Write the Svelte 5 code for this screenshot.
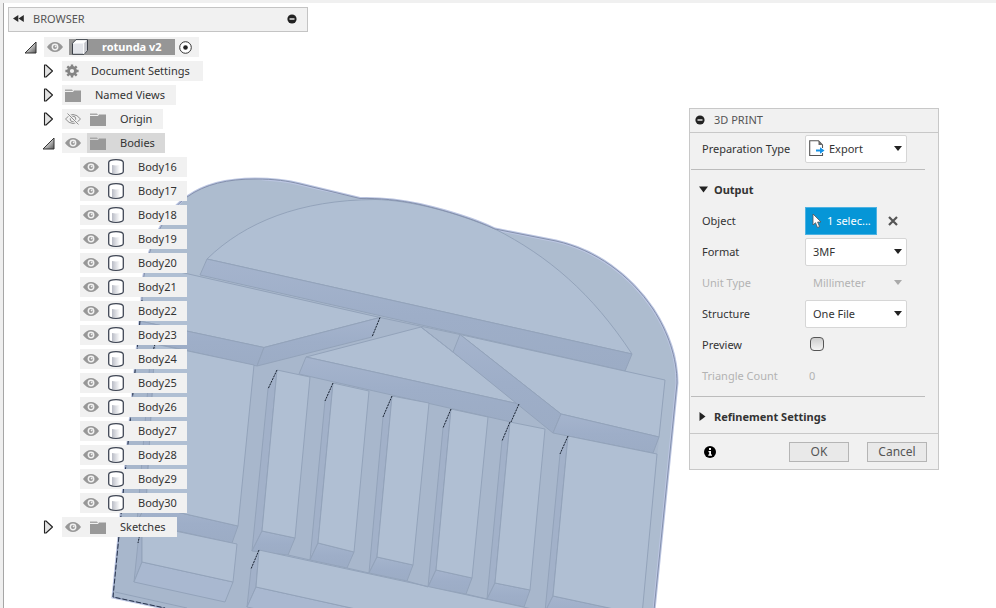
<script>
  const bodies = Array.from({ length: 15 }, (_, i) => ({
    name: `Body${16 + i}`, level: 2, kind: 'body', eye: 'on'
  }));
  const nodes = [
    { name: 'rotunda v2', level: 0, kind: 'cube', eye: 'on', open: true, root: true },
    { name: 'Document Settings', level: 1, kind: 'gear', open: false },
    { name: 'Named Views', level: 1, kind: 'folder', open: false },
    { name: 'Origin', level: 1, kind: 'folder', eye: 'off', open: false },
    { name: 'Bodies', level: 1, kind: 'folder', eye: 'on', open: true, picked: true },
    ...bodies,
    { name: 'Sketches', level: 1, kind: 'folder', eye: 'on', open: false }
  ];

  // Each recess: floor corners tl, tr, br, bl, then the outer wall corners left, low, lowRight
  const columns = [
    { tl: [277, 370], tr: [310, 377], br: [295, 538], bl: [262, 531], left: [268, 389], low: [252, 551], lr: [288, 555] },
    { tl: [333, 383], tr: [369, 391], br: [354, 552], bl: [318, 543], left: [325, 401], low: [310, 560], lr: [347, 568] },
    { tl: [392, 396], tr: [429, 403], br: [413, 565], bl: [377, 557], left: [383, 417], low: [369, 573], lr: [407, 581] },
    { tl: [451, 409], tr: [488, 417], br: [472, 578], bl: [436, 570], left: [443, 428], low: [428, 587], lr: [466, 594] },
    { tl: [510, 422], tr: [545, 429], br: [530, 590], bl: [495, 583], left: [502, 441], low: [487, 599], lr: [524, 607] },
    { tl: [568, 436], tr: [657, 454], br: [642, 615], bl: [553, 596], left: [560, 454], low: [545, 612], lr: [636, 632] },
    { tl: [155, 344], tr: [254, 365], br: [238, 526], bl: [146, 505], left: [150, 362], low: [137, 522], lr: [232, 543] },
    { tl: [142, 524], tr: [237, 544], br: [233, 582], bl: [142, 562], left: [138, 543], low: [134, 582], lr: [225, 602] },
    { tl: [259, 550], tr: [560, 615], br: [560, 654], bl: [256, 587], left: [251, 569], low: [247, 607], lr: [550, 674] }
  ];
  const pts = (...list) => list.map((p) => p.join(',')).join(' ');

  const outline =
    'M187 197 C205 184 228 179 255 179 C275 179 288 181 300 184 L360 198.500 C378 198 400 200 420 204.500 C448 211 476 220 495 229 L556 241 C596 250 630 275 653 309 C668 332 677 358 677 383 L653 620 L220 620 L113 597 L142 300 C142 258 160 216 187 197 Z';

  let preparation = $state('Export');
  let format = $state('3MF');
  let unit = $state('Millimeter');
  let structure = $state('One File');
  let preview = $state(false);
</script>

{#snippet eyeIcon(state)}
  <svg width="16" height="12" viewBox="0 0 16 12" aria-hidden="true">
    {#if state === 'on'}
      <path d="M0 6 Q3.500 1 8 1 T16 6 Q12.500 11 8 11 T0 6Z" fill="#979797" />
      <circle cx="8" cy="6" r="2.700" fill="#979797" stroke="#f1f1f1" stroke-width="1.500" />
      <circle cx="8.600" cy="5.400" r="0.900" fill="#f1f1f1" />
    {:else}
      <path d="M0.500 6 Q4 1.500 8 1.500 T15.500 6 Q12 10.500 8 10.500 T0.500 6Z" fill="none" stroke="#8f8f8f" />
      <circle cx="8" cy="6" r="2.800" fill="none" stroke="#8f8f8f" />
      <path d="M2.500 0.500 L13.500 11.500" stroke="#f1f1f1" stroke-width="2.500" />
      <path d="M2.500 0.500 L13.500 11.500" stroke="#8f8f8f" />
    {/if}
  </svg>
{/snippet}

{#snippet nodeIcon(kind)}
  {#if kind === 'cube'}
    <svg width="18" height="16" viewBox="0 0 18 16" aria-hidden="true">
      <path d="M1.500 4.300 L5 0.700 H16.500 V11.500 L13 15.300 H1.500Z" fill="#e3e5ea" stroke="#3b4048" stroke-linejoin="round" />
      <path d="M2 4.500 L5.300 1.200 H16 L12.700 4.500Z" fill="#fff" />
      <path d="M13 4.500 L16 1.200 V11.400 L13 14.700Z" fill="#c3c5cb" />
      <path d="M12.700 15 V4.500" stroke="#fff" />
    </svg>
  {:else if kind === 'gear'}
    <svg width="14" height="14" viewBox="0 0 14 14" aria-hidden="true">
      <circle cx="7" cy="7" r="3.500" fill="none" stroke="#858585" stroke-width="2.800" />
      <path d="M7 0.400 V3 M7 11 V13.600 M0.400 7 H3 M11 7 H13.600 M2.300 2.300 L4.200 4.200 M9.800 9.800 L11.700 11.700 M2.300 11.700 L4.200 9.800 M9.800 4.200 L11.700 2.300" stroke="#858585" stroke-width="2.400" />
    </svg>
  {:else if kind === 'folder'}
    <svg width="16" height="13" viewBox="0 0 16 13" aria-hidden="true">
      <path d="M0 0.500 H7 L8 2 H0Z" fill="#a8a8a8" />
      <path d="M0 3 H8 L9 1.500 H16 V13 H0Z" fill="#999" />
    </svg>
  {:else}
    <svg width="16" height="16" viewBox="0 0 16 16" aria-hidden="true">
      <path d="M0.700 3.500 C0.700 1.600 3.500 0.700 8 0.700 S15.300 1.600 15.300 3.500 V12.500 C15.300 14.400 12.500 15.300 8 15.300 S0.700 14.400 0.700 12.500Z" fill="#fff" stroke="#3f4654" stroke-width="1.300" />
      <path d="M4 6 Q8 6.800 12 6 V14 Q8 14.800 4 14Z" fill="url(#barrel)" />
    </svg>
  {/if}
{/snippet}

{#snippet collapseIcon()}
  <svg width="10" height="10" viewBox="0 0 10 10" aria-hidden="true">
    <circle cx="5" cy="5" r="4.600" fill="#222" />
    <path d="M2.500 5 H7.500" stroke="#fff" stroke-width="1.300" />
  </svg>
{/snippet}

<main class="workspace">
  <svg class="model" viewBox="0 0 996 608" preserveAspectRatio="xMinYMin slice" role="img" aria-label="Rotunda model">
    <defs>
      <linearGradient id="wall" x1="0" y1="0" x2="0" y2="1">
        <stop offset="0" stop-color="#a5b4cd" />
        <stop offset="0.500" stop-color="#9eaec8" />
        <stop offset="1" stop-color="#9cacc5" />
      </linearGradient>
      <linearGradient id="barrel">
        <stop offset="0" stop-color="#b9bcc6" />
        <stop offset="1" stop-color="#fff" />
      </linearGradient>
      <linearGradient id="corner" x1="0" y1="0" x2="1" y2="1">
        <stop offset="0.300" stop-color="#eee" />
        <stop offset="1" stop-color="#555" />
      </linearGradient>
      <clipPath id="shape"><path d={outline} /></clipPath>
    </defs>
    <path d={outline} fill="#adbccf" stroke="#bcc6e2" stroke-width="3" />
    <g clip-path="url(#shape)" stroke="#93a3ba" stroke-width="1" stroke-linejoin="round">
      <path d="M187 197 C205 184 228 179 255 179 L360 198 L207 259 L200 275 L130 260Z" fill="#adbccf" stroke="none" />
      <path d="M100 254 L665 380 L640 625 L100 625Z" fill="#a8b7cc" stroke="none" />
      <path d="M207 259 C245 222 300 200 375 199.500 C410 200 455 212 495 229 C548 256 592 293 632 354Z" fill="#b0bfd3" />
      <path d="M207 259 L632 354 L625 371 L200 275Z" fill="url(#wall)" />
      <path d="M140 263 L380 317.500 L264 347.500 L130 319Z" fill="#b0bfd3" />
      <path d="M130 319 L264 347.500 L257 366 L130 338Z" fill="url(#wall)" />
      <path d="M264 347.500 L380 317.500 L372 337 L257 366Z" fill="url(#wall)" />
      <path d="M380 317.500 L460 334.500" fill="none" />
      <path d="M421 327 L306 357 L519 404Z" fill="#b0bfd3" />
      <path d="M306 357 L519 404 L511 422 L299 374Z" fill="url(#wall)" />
      <path d="M421 327 L453 352" fill="none" />
      <path d="M421 327 L453 352 L519 404Z" fill="#b0bfd3" stroke="none" />
      <path d="M460 334.500 L665 380 L659 437 L561 414Z" fill="#b0bfd3" />
      <path d="M460 334.500 L561 414 L553 433 L453 352Z" fill="url(#wall)" />
      <path d="M561 414 L659 437 L653 453 L553 433Z" fill="url(#wall)" />
      {#each columns as c}
        <polygon points={pts(c.left, c.tl, c.bl, c.low)} fill="#a2b1c9" />
        <polygon points={pts(c.low, c.bl, c.br, c.lr)} fill={c.tl[1] > 500 ? '#a9b8d0' : 'url(#wall)'} />
        <polygon points={pts(c.tl, c.tr, c.br, c.bl)} fill="#b0bfd3" />
      {/each}
      <path d="M288 555 L310 560 M347 568 L369 573 M407 581 L428 587 M466 594 L487 599 M115 592 L187 608" fill="none" />
    </g>
    <path d={outline} fill="none" stroke="#8490ac" stroke-width="1" />
    <path d="M142 300 L113 597 L165 608" fill="none" stroke="#29364e" stroke-width="1" stroke-dasharray="5 2" />
    <g stroke="#1b2432" stroke-width="1" stroke-dasharray="2 1">
      {#each columns as c}
        <line x1={c.tl[0]} y1={c.tl[1]} x2={c.left[0]} y2={c.left[1]} />
      {/each}
      <path d="M380 317.500 L372 337 M519 404 L511 422" />
    </g>
  </svg>

  <section class="browser" aria-label="Browser">
    <header class="browser-head">
      <button class="plain" aria-label="Hide browser">
        <svg width="11" height="7" viewBox="0 0 11 7" aria-hidden="true"><path d="M5.300 0 V7 L0 3.500Z M10.800 0 V7 L5.500 3.500Z" fill="#2b2b2b" /></svg>
      </button>
      <h2>BROWSER</h2>
      <button class="plain push" aria-label="Collapse browser">{@render collapseIcon()}</button>
    </header>
    <ul class="tree">
      {#each nodes as node}
        <li class="row level{node.level}" class:root={node.root}>
          {#if node.open !== undefined}
            <button class="plain twist" aria-label="Toggle {node.name}" aria-expanded={node.open}>
              {#if node.open}
                <svg width="13" height="13" viewBox="0 0 13 13" aria-hidden="true"><path d="M1 12 L12 1 V12Z" fill="url(#corner)" stroke="#333" stroke-linejoin="round" /></svg>
              {:else}
                <svg width="13" height="14" viewBox="0 0 13 14" aria-hidden="true"><path d="M2.500 1 H4 L10.500 7 L4 13 H2.500Z" fill="#e2e2e2" stroke="#222" stroke-width="1.100" stroke-linejoin="round" /></svg>
              {/if}
            </button>
          {/if}
          <div class="item">
            {#if node.eye}
              <button class="plain eye" aria-label="Visibility of {node.name}">{@render eyeIcon(node.eye)}</button>
            {/if}
            <span class="label {node.kind}" class:picked={node.picked}>
              {@render nodeIcon(node.kind)}
              <span class="name">{node.name}</span>
            </span>
            {#if node.root}
              <button class="plain active" aria-label="Activate component">
                <svg width="13" height="13" viewBox="0 0 13 13" aria-hidden="true">
                  <circle cx="6.500" cy="6.500" r="5.800" fill="#fff" stroke="#333" />
                  <circle cx="6.500" cy="6.500" r="2.300" fill="#222" />
                </svg>
              </button>
            {/if}
          </div>
        </li>
      {/each}
    </ul>
  </section>

  <form class="dialog" aria-label="3D Print" onsubmit={(e) => e.preventDefault()}>
    <header class="dialog-head">
      <button type="button" class="plain" aria-label="Collapse dialog">{@render collapseIcon()}</button>
      <h2>3D PRINT</h2>
    </header>
    <div class="fields">
      <div class="field">
        <label for="prep">Preparation Type</label>
        <span class="select with-icon">
          <svg class="export" width="16" height="17" viewBox="0 0 16 17" aria-hidden="true">
            <path d="M13.500 8 V5 L9.500 0.700 H0.700 V15.500 H13.500 V13" fill="#fff" stroke="#555" stroke-width="1.100" />
            <path d="M9.500 0.700 V5 H13.500Z" fill="#666" />
            <path d="M7 9.500 H11 V7.200 L15.500 10.500 L11 13.800 V11.500 H7Z" fill="#1592e6" />
          </svg>
          <select id="prep" bind:value={preparation}><option>Export</option></select>
        </span>
      </div>
      <hr />
      <button type="button" class="plain group" aria-expanded="true">
        <svg width="9" height="7" viewBox="0 0 9 7" aria-hidden="true"><path d="M0 0.500 H9 L4.500 6.500Z" fill="#222" /></svg>
        Output
      </button>
      <div class="field">
        <label for="object">Object</label>
        <button type="button" id="object" class="pick">
          <svg width="10" height="16" viewBox="0 0 10 16" aria-hidden="true"><path d="M1 1 V12 L3.500 9.700 L5.500 14.500 L7.500 13.600 L5.600 9 H9Z" fill="#fff" stroke="#5a5050" stroke-width="0.800" /></svg>
          1 selec...
        </button>
        <button type="button" class="plain clear" aria-label="Clear selection">
          <svg width="10" height="10" viewBox="0 0 10 10" aria-hidden="true"><path d="M1 1 L9 9 M9 1 L1 9" stroke="#555" stroke-width="2.200" /></svg>
        </button>
      </div>
      <div class="field">
        <label for="format">Format</label>
        <span class="select"><select id="format" bind:value={format}><option>3MF</option></select></span>
      </div>
      <div class="field off">
        <label for="unit">Unit Type</label>
        <span class="select"><select id="unit" disabled bind:value={unit}><option>Millimeter</option></select></span>
      </div>
      <div class="field">
        <label for="structure">Structure</label>
        <span class="select"><select id="structure" bind:value={structure}><option>One File</option></select></span>
      </div>
      <div class="field">
        <label for="preview">Preview</label>
        <input id="preview" type="checkbox" bind:checked={preview} />
      </div>
      <div class="field off">
        <label for="count">Triangle Count</label>
        <output id="count">0</output>
      </div>
      <hr />
      <button type="button" class="plain group" aria-expanded="false">
        <svg width="9" height="9" viewBox="0 0 9 9" aria-hidden="true"><path d="M0.500 0 L6.500 4.500 L0.500 9Z" fill="#222" /></svg>
        Refinement Settings
      </button>
    </div>
    <footer>
      <button type="button" class="plain info" aria-label="Information">
        <svg width="12" height="12" viewBox="0 0 12 12" aria-hidden="true">
          <circle cx="6" cy="6" r="6" fill="#000" />
          <path d="M5 2 H7 V4 H5Z M4.500 5 H7 V8.500 H8 V9.800 H4.300 V8.500 H5.200 V6.200 H4.500Z" fill="#fff" />
        </svg>
      </button>
      <button type="submit" class="action">OK</button>
      <button type="button" class="action">Cancel</button>
    </footer>
  </form>
</main>

<style>
  :global(body) {
    margin: 0;
    background: #fff;
  }
  .workspace {
    position: relative;
    box-sizing: border-box;
    display: flex;
    justify-content: space-between;
    align-items: flex-start;
    height: 100vh;
    min-height: 560px;
    overflow: hidden;
    padding: 4px 57px 0 4px;
    border-top: 3px solid #f0f0f0;
    font: 11px/20px "Noto Sans", "Open Sans", sans-serif;
    color: #333;
  }
  .workspace::before {
    content: "";
    position: absolute;
    inset: 0 auto 0 0;
    width: 3px;
    background: #efefef;
    border-right: 1px solid #a6a6a6;
  }
  .model {
    position: absolute;
    top: -3px;
    left: 0;
    width: 100%;
    height: 100vh;
  }
  svg {
    display: block;
    flex: none;
  }
  h2 {
    margin: 0;
    font-size: 11px;
    font-weight: 400;
    color: #555;
  }
  button,
  select {
    font: inherit;
    color: inherit;
  }
  .plain {
    display: flex;
    align-items: center;
    margin: 0;
    padding: 0;
    border: 0;
    background: none;
  }
  .browser {
    position: relative;
    width: 300px;
    margin-left: 4px;
  }
  .browser-head {
    display: flex;
    align-items: center;
    box-sizing: border-box;
    height: 25px;
    padding: 0 10px 2px 4px;
    gap: 9px;
    background: #f1f1f1;
    border: 1px solid #c4c4c4;
  }
  .push {
    margin-left: auto;
  }
  .tree {
    display: flex;
    flex-direction: column;
    gap: 4px;
    margin: 0;
    padding: 5px 0 0;
    list-style: none;
  }
  .row {
    display: flex;
    height: 20px;
  }
  .level0 {
    padding-left: 16px;
  }
  .level1 {
    padding-left: 34px;
  }
  .level2 {
    padding-left: 72px;
  }
  .twist {
    width: 20px;
  }
  .item {
    display: flex;
    align-items: center;
    background: #f1f1f1;
  }
  .eye {
    padding: 0 6px 0 3px;
  }
  .label {
    display: flex;
    align-items: center;
    height: 20px;
    padding: 0 11px 0 3px;
    gap: 14px;
  }
  .gear {
    gap: 12px;
    padding-right: 13px;
  }
  .body,
  .picked {
    padding-right: 10px;
  }
  .picked {
    background: #d8d8d8;
  }
  .root .item {
    padding-right: 7px;
  }
  .root .label {
    height: 16px;
    padding: 0 13px 0 2px;
    gap: 13px;
    background: #969696;
    color: #fff;
    font-weight: 700;
  }
  .active {
    padding-left: 4px;
  }
  .dialog {
    position: relative;
    box-sizing: border-box;
    width: 250px;
    margin-top: 101px;
    background: #f1f1f1;
    border: 1px solid #c8c8c8;
  }
  .dialog-head {
    display: flex;
    align-items: center;
    box-sizing: border-box;
    height: 24px;
    padding: 0 0 2px 5px;
    gap: 9px;
    border-bottom: 1px solid #c8c8c8;
  }
  .fields {
    padding-bottom: 1px;
  }
  .field {
    display: flex;
    align-items: center;
    height: 31px;
    padding-left: 12px;
  }
  .field label {
    width: 103px;
    flex: none;
  }
  hr {
    height: 1px;
    margin: 5px 13px 4px 1px;
    border: 0;
    background: #bcbcbc;
  }
  .group {
    height: 31px;
    padding-left: 9px;
    gap: 6px;
    font-weight: 700;
  }
  .select {
    position: relative;
    width: 102px;
  }
  .select::after {
    content: "";
    position: absolute;
    top: 11px;
    right: 5px;
    border: solid transparent;
    border-width: 5px 4px 0;
    border-top-color: #222;
  }
  select {
    display: block;
    appearance: none;
    box-sizing: border-box;
    width: 100%;
    height: 28px;
    padding: 0 14px 0 7px;
    border: 1px solid #d6d6d6;
    border-radius: 2px;
    background: #fff;
    outline: 0;
  }
  .with-icon select {
    padding-left: 23px;
  }
  .export {
    position: absolute;
    top: 5px;
    left: 4px;
  }
  .off {
    color: #b3b3b3;
  }
  .off select {
    background: none;
    border-color: transparent;
    opacity: 1;
  }
  .off .select::after {
    border-top-color: #aaa;
  }
  .pick {
    display: flex;
    align-items: center;
    box-sizing: border-box;
    width: 72px;
    height: 28px;
    padding: 0 0 0 6px;
    gap: 5px;
    border: 1px solid #4db2e2;
    background: #0696d7;
    color: #fff;
    white-space: nowrap;
  }
  .clear {
    margin-left: 11px;
  }
  input[type="checkbox"] {
    appearance: none;
    box-sizing: border-box;
    width: 14px;
    height: 14px;
    margin: 0 0 2px 5px;
    border: 1px solid #555;
    border-radius: 4px;
    background: linear-gradient(#cdcdcd, #f4f4f4);
  }
  output {
    padding-left: 4px;
  }
  footer {
    display: flex;
    align-items: center;
    height: 35px;
    padding: 0 11px 0 14px;
    gap: 18px;
    border-top: 1px solid #c8c8c8;
  }
  .info {
    margin-right: auto;
  }
  .action {
    box-sizing: border-box;
    width: 60px;
    height: 20px;
    padding: 0;
    border: 1px solid #b5b5b5;
    background: #e9e9e9;
    color: #555;
    font-size: 12px;
    line-height: 18px;
  }
</style>
